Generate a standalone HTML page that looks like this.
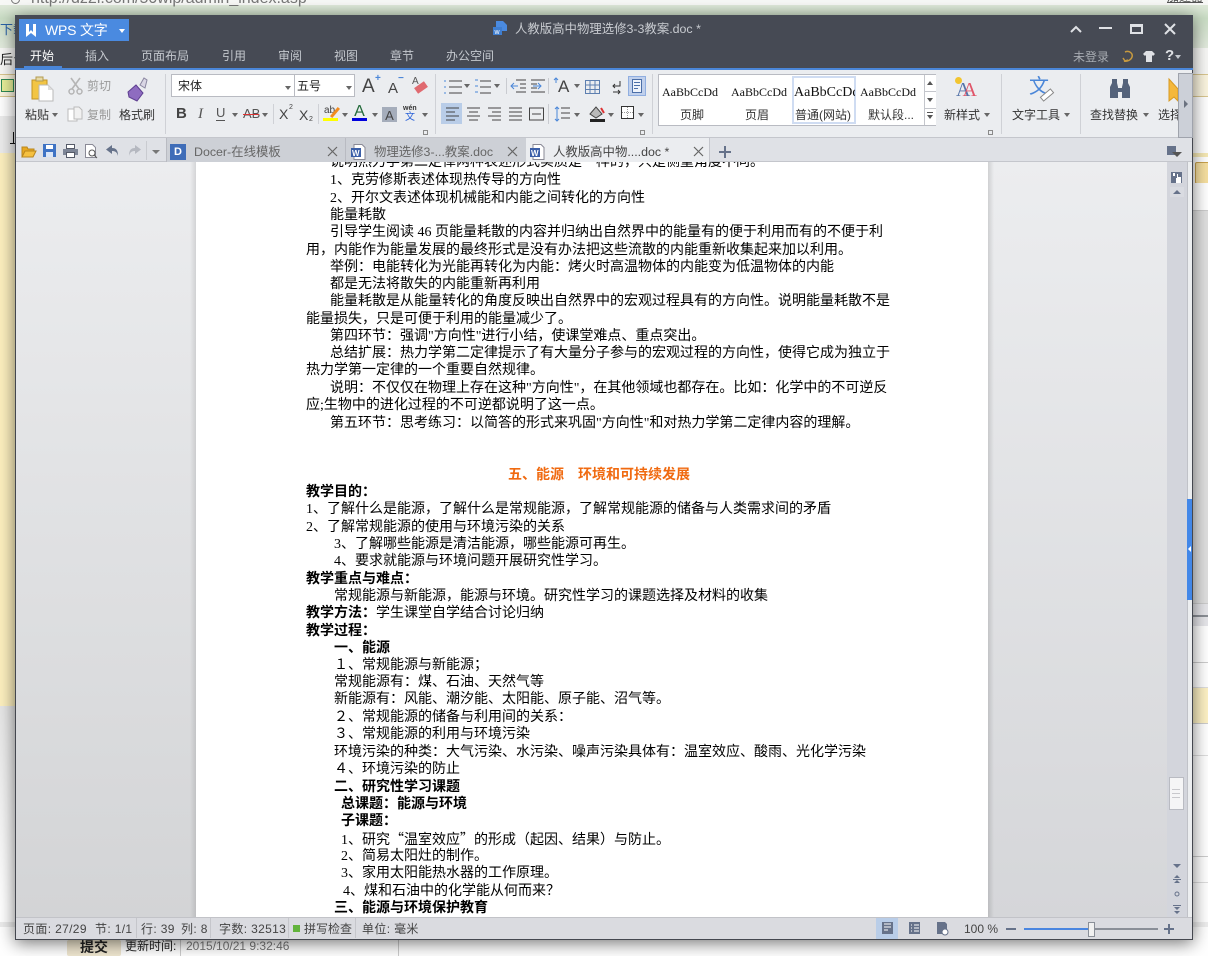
<!DOCTYPE html>
<html><head><meta charset="utf-8"><style>
html,body{margin:0;padding:0;width:1208px;height:956px;overflow:hidden;background:#fff}
body{position:relative;font-family:"Liberation Sans","Noto Sans CJK SC",sans-serif;font-size:12px;color:#333}
.a,.l,.t,.r,.s{position:absolute;white-space:nowrap}
.l{font-family:"Liberation Serif","Noto Sans CJK SC",serif;font-size:14px;line-height:18px;color:#000;height:18px}
.b{font-weight:700;color:#000}
.t{color:#c4c8ce;font-size:12px;line-height:18px;top:47px}
.r{font-size:12px;line-height:14px;color:#333;top:108px}
.g{color:#9a9a9a}
.s{top:922px;font-size:12px;line-height:14px;color:#444;letter-spacing:.35px}
.v{position:absolute;top:918px;width:1px;height:20px;background:#c5c6cb}
.d{position:absolute;width:0;height:0;border:3px solid transparent;border-top:4px solid #666;border-bottom:0}
.q{font-family:"Noto Sans CJK SC",sans-serif}
svg{position:absolute;overflow:visible}
</style></head><body>
<!-- background -->
<div class="a" style="left:0;top:5px;width:1208px;height:44px;background:linear-gradient(#dfe9da,#c9dcc4 30%,#e4ecdf)"></div>
<div class="a" style="left:0;top:-6px;width:1208px;height:11px;background:#f7f8f6"></div>
<div class="a" style="left:31px;top:-9px;color:#777;font-size:16px;line-height:16px">http://dz2i.com/50wip/admin_index.asp</div>
<div class="a" style="left:11px;top:-5px;width:7px;height:7px;border:1px solid #777;border-radius:50%"></div>
<div class="a" style="left:850px;top:-6px;color:#333;font-size:10px;line-height:10px">×</div>
<div class="a" style="left:1167px;top:-9px;color:#555;font-size:12px;line-height:12px;text-decoration:underline">加速器</div>
<div class="a" style="left:0;top:22px;font-size:13px;color:#2a62a8;line-height:16px">下载</div>
<div class="a" style="left:0;top:48px;width:1208px;height:26px;background:#f8f8f6"></div>
<div class="a" style="left:0;top:52px;font-size:13px;color:#222;line-height:16px">后台</div>
<div class="a" style="left:0;top:74px;width:1208px;height:21px;background:#fbf5df;border-top:1px solid #d9c68f;border-bottom:1px solid #d9c68f"></div>
<div class="a" style="left:1px;top:79px;width:11px;height:11px;background:#e8ef9a;border:1px solid #2d8a55"></div>
<div class="a" style="left:0;top:97px;width:1208px;height:19px;background:#fff"></div>
<div class="a" style="left:0;top:116px;width:1208px;height:37px;background:#ececec"></div>
<div class="a" style="left:10px;top:143px;width:6px;height:1px;background:#111"></div>
<div class="a" style="left:13px;top:132px;width:1px;height:11px;background:#111"></div>
<div class="a" style="left:0;top:153px;width:16px;height:553px;background:#fdf0bf"></div>
<div class="a" style="left:0;top:706px;width:16px;height:200px;background:linear-gradient(#e6e6e6,#fff)"></div>
<div class="a" style="left:0;top:906px;width:16px;height:50px;background:#fff"></div>
<div class="a" style="left:0;top:922px;width:16px;height:5px;background:#ececec"></div>
<div class="a" style="left:1193px;top:116px;width:15px;height:37px;background:#fff"></div>
<div class="a" style="left:1193px;top:153px;width:15px;height:4px;background:#f6e9b5"></div>
<div class="a" style="left:1195px;top:162px;width:14px;height:20px;background:#f6dfa0;border:1px solid #c9a24c;border-radius:2px"></div>
<div class="a" style="left:1193px;top:183px;width:15px;height:27px;background:#fff"></div>
<div class="a" style="left:1193px;top:210px;width:15px;height:393px;background:#e0e0e0;border-top:1px solid #ccc"></div>
<div class="a" style="left:1193px;top:603px;width:15px;height:23px;background:#e6e6ea;border-top:1px solid #ccc"></div>
<div class="a" style="left:1193px;top:615px;width:15px;height:2px;background:#8b8f96"></div>
<div class="a" style="left:1193px;top:626px;width:15px;height:330px;background:#fff"></div>
<div class="a" style="left:1193px;top:662px;width:15px;height:1px;background:#ccc"></div>
<div class="a" style="left:1193px;top:687px;width:15px;height:35px;background:#fdf1c4;border-top:1px solid #ddd;border-bottom:1px solid #ccc"></div>
<div class="a" style="left:1193px;top:755px;width:15px;height:1px;background:#ddd"></div>
<div class="a" style="left:1193px;top:856px;width:15px;height:25px;border-top:1px solid #ccc;border-bottom:1px solid #ddd"></div>
<div class="a" style="left:1193px;top:922px;width:15px;height:5px;background:#eee"></div>
<div class="a" style="left:67px;top:940px;width:54px;height:16px;background:#efe6cf;color:#222;font-weight:700;font-size:14px;text-align:center;line-height:15px;border-radius:2px">提交</div>
<div class="a" style="left:125px;top:939px;font-size:12px;color:#222;line-height:15px">更新时间:</div>
<div class="a" style="left:186px;top:939px;font-size:12px;color:#777;line-height:15px">2015/10/21 9:32:46</div>
<div class="a" style="left:180px;top:940px;width:1px;height:16px;background:#ccc"></div>
<div class="a" style="left:398px;top:940px;width:1px;height:16px;background:#ccc"></div>

<!-- window -->
<div class="a" style="left:15px;top:15px;width:1176px;height:923px;border:1px solid #44474f;box-shadow:0 3px 16px rgba(0,0,0,.55);background:#d6d7db"></div>
<!-- title bar -->
<div class="a" style="left:15px;top:15px;width:1178px;height:53px;background:#464a54"></div>
<div class="a" style="left:15px;top:68px;width:1178px;height:2px;background:#4a86d8"></div>
<div class="a" style="left:19px;top:19px;width:110px;height:22px;background:#4a8ae0"></div>
<svg style="left:25px;top:24px" width="12" height="13"><path d="M1 0h3v8l2-2 2 2V0h3v13l-5-4-5 4z" fill="#fff"/></svg>
<div class="a" style="left:45px;top:21px;color:#fff;font-size:14px;line-height:18px;letter-spacing:-.2px">WPS 文字</div>
<div class="d" style="left:119px;top:29px;border-top-color:#fff"></div>
<svg style="left:493px;top:21px" width="15" height="14"><path d="M3 0h7l4 4v6H3z" fill="#4a8ae0"/><rect x="0" y="6" width="9" height="8" fill="#3f7ed0"/><text x="1.500" y="13" font-size="7" fill="#fff" font-family="Liberation Sans">w</text></svg>
<div class="a" style="left:515px;top:20px;font-size:12.400px;line-height:18px;color:#c8cbd0">人教版高中物理选修3-3教案.doc *</div>
<svg style="left:0;top:0" width="1208" height="70"><g stroke="#dfe1e5" stroke-width="2" fill="none"><path d="M1071 32l5-5 5 5"/><path d="M1099 28h13"/><rect x="1131" y="25" width="11" height="8"/><path d="M1165 24l10 10M1175 24l-10 10"/></g><path d="M1130 24h13v3h-13z" fill="#dfe1e5"/></svg>
<!-- tabs -->
<div class="a" style="left:30px;top:46px;color:#fff;font-size:12px;line-height:20px">开始</div>
<div class="a" style="left:24px;top:66px;width:38px;height:2px;background:#4a86d8"></div>
<div class="t" style="left:85px">插入</div>
<div class="t" style="left:141px">页面布局</div>
<div class="t" style="left:222px">引用</div>
<div class="t" style="left:278px">审阅</div>
<div class="t" style="left:334px">视图</div>
<div class="t" style="left:390px">章节</div>
<div class="t" style="left:446px">办公空间</div>
<div class="t" style="left:1073px;top:48px;color:#a8acb2">未登录</div>
<svg style="left:1122px;top:50px" width="12" height="13"><path d="M3 2c5-2 8 2 7 5s-5 5-8 4M1 8l2 3 3-1" fill="none" stroke="#c79a3f" stroke-width="1.500"/></svg>
<svg style="left:1143px;top:50px" width="12" height="12"><path d="M3 1h6l3 3-2 2-1-1v7H3V5L2 6 0 4z" fill="#dfe1e5"/></svg>
<div class="a" style="left:1165px;top:47px;color:#dfe1e5;font-size:15px;line-height:18px;font-weight:700">?</div>
<div class="d" style="left:1175px;top:55px;border-top-color:#c4c8ce"></div>

<!-- ribbon -->
<div class="a" style="left:16px;top:70px;width:1176px;height:68px;background:#ebedf0;border-bottom:1px solid #c4c6cc;box-sizing:border-box"></div>
<div class="a" style="left:165px;top:74px;width:1px;height:60px;background:#cfd1d6"></div>
<div class="a" style="left:435px;top:74px;width:1px;height:60px;background:#cfd1d6"></div>
<div class="a" style="left:652px;top:74px;width:1px;height:60px;background:#cfd1d6"></div>
<div class="a" style="left:1001px;top:74px;width:1px;height:60px;background:#cfd1d6"></div>
<div class="a" style="left:1080px;top:74px;width:1px;height:60px;background:#cfd1d6"></div>
<!-- clipboard -->
<svg style="left:31px;top:77px" width="24" height="25"><path d="M1 3h15v19H1z" fill="#f2c544" stroke="#c29425"/><path d="M5 0h7v4H5z" fill="#e6d9a6" stroke="#b39a50"/><path d="M8 8h9l5 5v11H8z" fill="#fff" stroke="#b9b9b9"/><path d="M17 8v5h5z" fill="#ddd"/></svg>
<div class="r" style="left:25px">粘贴</div><div class="d" style="left:52px;top:113px"></div>
<svg style="left:68px;top:78px" width="16" height="17"><path d="M3 0l8 11M12 0L4 11" stroke="#b5b5b5" stroke-width="1.600" fill="none"/><circle cx="3.500" cy="13.500" r="2.500" fill="none" stroke="#b5b5b5" stroke-width="1.500"/><circle cx="11.500" cy="13.500" r="2.500" fill="none" stroke="#b5b5b5" stroke-width="1.500"/></svg>
<div class="r g" style="left:87px;top:79px">剪切</div>
<svg style="left:67px;top:106px" width="16" height="16"><path d="M1 3h9v12H1z" fill="#fff" stroke="#bbb"/><path d="M7 1h5l3 3v9H7z" fill="#f1f1f1" stroke="#bbb"/></svg>
<div class="r g" style="left:87px">复制</div>
<svg style="left:127px;top:77px" width="22" height="25"><path d="M1 15L9 8l7 8-6 8-8-4z" fill="#8e6cc0" stroke="#5e3f90"/><path d="M13 8l4-7 3 2-2 8z" fill="#d9d6e4" stroke="#8a86a0"/></svg>
<div class="r" style="left:119px">格式刷</div>
<!-- font -->
<div class="a" style="left:171px;top:74px;width:182px;height:21px;background:#fff;border:1px solid #b9bbc2"></div>
<div class="a" style="left:294px;top:75px;width:1px;height:21px;background:#b9bbc2"></div>
<div class="a" style="left:178px;top:79px;font-size:12px;line-height:14px;color:#222">宋体</div>
<div class="a" style="left:297px;top:79px;font-size:12px;line-height:14px;color:#222">五号</div>
<div class="d" style="left:285px;top:86px"></div>
<div class="d" style="left:346px;top:86px"></div>
<div class="a" style="left:362px;top:75px;font-size:19px;line-height:24px;color:#444">A</div>
<div class="a" style="left:375px;top:73px;font-size:10px;line-height:12px;color:#4a86d8;font-weight:700">+</div>
<div class="a" style="left:388px;top:79px;font-size:15px;line-height:20px;color:#444">A</div>
<div class="a" style="left:398px;top:73px;font-size:10px;line-height:12px;color:#4a86d8;font-weight:700">−</div>
<div class="a" style="left:412px;top:77px;font-size:10px;line-height:10px;color:#555">A</div>
<div class="a" style="left:415px;top:84px;width:12px;height:7px;background:#e06a70;transform:rotate(-35deg)"></div>
<div class="a" style="left:176px;top:106px;font-size:15px;font-weight:700;color:#444;line-height:16px">B</div>
<div class="a" style="left:198px;top:106px;font-size:15px;font-style:italic;color:#555;line-height:16px;font-family:'Liberation Serif',serif">I</div>
<div class="a" style="left:216px;top:105px;font-size:13px;color:#555;line-height:16px;border-bottom:1px solid #555;height:15px">U</div>
<div class="d" style="left:232px;top:113px"></div>
<div class="a" style="left:243px;top:106px;font-size:13px;color:#555;line-height:16px">AB</div>
<div class="a" style="left:243px;top:114px;width:16px;height:1px;background:#d33"></div>
<div class="d" style="left:262px;top:113px"></div>
<div class="a" style="left:273px;top:104px;width:1px;height:20px;background:#cfd1d6"></div>
<div class="a" style="left:279px;top:105px;font-size:14px;color:#444;line-height:18px">X</div><div class="a" style="left:289px;top:104px;font-size:7px;color:#444;line-height:8px">2</div>
<div class="a" style="left:299px;top:106px;font-size:14px;color:#444;line-height:18px">X</div><div class="a" style="left:309px;top:116px;font-size:7px;color:#444;line-height:8px">2</div>
<div class="a" style="left:318px;top:104px;width:1px;height:20px;background:#cfd1d6"></div>
<div class="a" style="left:324px;top:105px;font-size:10px;color:#444;line-height:12px">ab</div>
<div class="a" style="left:329px;top:111px;width:12px;height:3px;background:#f28c1f;transform:rotate(-50deg)"></div>
<div class="a" style="left:323px;top:118px;width:15px;height:3px;background:#ff0"></div>
<div class="d" style="left:342px;top:113px"></div>
<div class="a" style="left:352px;top:103px;width:15px;font-size:16px;color:#236a3a;line-height:18px;text-align:center">A</div>
<div class="a" style="left:352px;top:118px;width:15px;height:3px;background:#00d"></div>
<div class="d" style="left:372px;top:113px"></div>
<div class="a" style="left:382px;top:107px;width:15px;height:15px;background:#a5adbb;font-size:13px;text-align:center;line-height:17px;color:#444">A</div>
<div class="a" style="left:403px;top:105px;font-size:7px;color:#333;line-height:8px;font-weight:700">wén</div>
<div class="a" style="left:405px;top:113px;font-size:10px;color:#2a62d8;line-height:10px">文</div>
<div class="d" style="left:422px;top:113px"></div>
<div class="a" style="left:423px;top:130px;width:3px;height:3px;border:1px solid #8a8a8a"></div>
<!-- paragraph icons -->
<div class="a" style="left:441px;top:103px;width:21px;height:21px;background:#b9cde8"></div>
<svg style="left:0;top:0" width="1208" height="140" fill="none">
<g stroke="#444"><path d="M449 81h13M449 87h13M449 93h13"/><path d="M480 81h11M480 87h11M480 93h11"/><path d="M516 80h10M520 84h6M520 88h6M516 92h10"/><path d="M531 80h14M531 84h6M531 88h6M531 92h14"/></g>
<g stroke="#4a86d8"><path d="M444 81h2M444 87h2M444 93h2M475 80h3M475 86h3M475 92h3"/><path d="M518 86h-7M514 83l-3 3 3 3M533 86h8M538 83l3 3-3 3"/></g>
<g stroke="#5d7fb0"><path d="M585.500 80.500h14v13h-14zM585 85h15M585 89.500h15M590 80v14M595 80v14"/></g>
<path d="M506.500 78v16M548.500 78v16" stroke="#c9cbd0"/>
<g stroke="#444"><path d="M446 108h13M446 112h9M446 116h13M446 120h9"/><path d="M467 108h13M469 112h9M467 116h13M469 120h9"/><path d="M488 108h13M492 112h9M488 116h13M492 120h9"/><path d="M509 108h13M509 112h13M509 116h13M509 120h13"/><path d="M529 108h15M529 120h15M529.500 108v12M543.500 108v12M532 114h9"/><path d="M561 108h9M561 113h9M561 118h9"/></g>
<path d="M557 107v14M555 109l2-2 2 2M555 119l2 2 2-2" stroke="#4a86d8"/>
<path d="M548.500 104v20" stroke="#c9cbd0"/>
<path d="M621.500 106.500h12v12h-12z" fill="#fff" stroke="#333"/><path d="M627.500 107v11M622 112.500h11" stroke="#999" stroke-dasharray="1 1"/>
<path d="M620 81v5h-7M615 84l-2 2 2 2M613 92h7M618 90l2 2-2 2" stroke="#333"/>
<path d="M590 114l6-7 6 7-6 4z" fill="#b9b9b9" stroke="#444"/><path d="M590 119h15v3h-15z" fill="#222"/><path d="M601 108l3 5" stroke="#d33" stroke-width="2"/>
<path d="M556 83v-5M554 80l2-2 2 2" stroke="#4a86d8"/>
</svg>
<div class="d" style="left:464px;top:84px"></div><div class="d" style="left:494px;top:84px"></div>
<div class="d" style="left:574px;top:84px"></div>
<div class="a" style="left:558px;top:77px;font-size:17px;color:#444;line-height:20px">A</div>
<svg style="left:446px;top:107px" width="14" height="14" fill="none" stroke="#444"><path d="M0 1h13M0 5h9M0 9h13M0 13h9"/></svg>
<div class="d" style="left:574px;top:113px"></div>
<div class="d" style="left:608px;top:113px"></div>
<div class="d" style="left:638px;top:113px"></div>
<div class="a" style="left:628px;top:76px;width:18px;height:20px;background:#c0d0ec;border:1px solid #90aee0;box-sizing:border-box"></div>
<div class="a" style="left:632px;top:79px;width:10px;height:14px;background:#eef3fb;border:1px solid #4c6fa8;box-sizing:border-box"></div>
<svg style="left:634px;top:82px" width="6" height="8"><path d="M0 .5h6M0 3.500h6M0 6.500h4" stroke="#4c6fa8"/></svg>
<div class="a" style="left:640px;top:130px;width:3px;height:3px;border:1px solid #8a8a8a"></div>
<!-- styles -->
<div class="a" style="left:658px;top:74px;width:276px;height:50px;background:#fff;border:1px solid #b9bbc2"></div>
<div class="a" style="left:792px;top:76px;width:60px;height:44px;background:#fff;border:2px solid #cfdcf2"></div>
<div class="a" style="left:662px;top:85px;font-family:'Liberation Serif',serif;font-size:12px;line-height:14px;color:#111">AaBbCcDd</div>
<div class="a" style="left:731px;top:85px;font-family:'Liberation Serif',serif;font-size:12px;line-height:14px;color:#111">AaBbCcDd</div>
<div class="a" style="left:794px;top:85px;width:61px;overflow:hidden;font-family:'Liberation Serif',serif;font-size:14px;line-height:16px;color:#111">AaBbCcDd</div>
<div class="a" style="left:860px;top:85px;font-family:'Liberation Serif',serif;font-size:12px;line-height:14px;color:#111">AaBbCcDd</div>
<div class="r" style="left:680px">页脚</div><div class="r" style="left:745px">页眉</div>
<div class="r" style="left:795px">普通(网站)</div><div class="r" style="left:868px">默认段...</div>
<div class="a" style="left:924px;top:75px;width:11px;height:50px;background:#fff;border-left:1px solid #c4c6cc"></div>
<div class="a" style="left:927px;top:81px;width:0;height:0;border:3px solid transparent;border-bottom:4px solid #555;border-top:0"></div>
<div class="d" style="left:927px;top:98px;border-top-color:#555"></div>
<div class="d" style="left:927px;top:115px;border-top-color:#555"></div>
<div class="a" style="left:927px;top:112px;width:6px;height:1px;background:#555"></div>
<div class="a" style="left:924px;top:91px;width:12px;height:1px;background:#c4c6cc"></div>
<div class="a" style="left:924px;top:108px;width:12px;height:1px;background:#c4c6cc"></div>
<div class="a" style="left:956px;top:80px;font-family:'Liberation Serif',serif;font-size:20px;line-height:20px;color:#5573a8"><span>A</span><span style="color:#e0566a;margin-left:-8px">A</span></div>
<div class="a" style="left:955px;top:77px;width:7px;height:7px;background:#f2c530;border-radius:50%"></div>
<div class="r" style="left:944px">新样式</div><div class="d" style="left:984px;top:113px"></div>
<div class="a" style="left:988px;top:130px;width:3px;height:3px;border:1px solid #8a8a8a"></div>
<div class="a" style="left:1029px;top:76px;font-size:20px;line-height:22px;color:#4a86d8">文</div>
<div class="a" style="left:1040px;top:92px;width:12px;height:4px;background:#fff;border:1px solid #888;transform:rotate(-40deg)"></div>
<div class="r" style="left:1012px">文字工具</div><div class="d" style="left:1064px;top:113px"></div>
<svg style="left:1109px;top:78px" width="22" height="22"><path d="M1 20V9l2-4V1h5v4l1 4v1h4V9l1-4V1h5v4l2 4v11h-8v-6H9v6z" fill="#54627a"/></svg>
<div class="r" style="left:1090px">查找替换</div><div class="d" style="left:1143px;top:113px"></div>
<div class="r" style="left:1158px">选择</div>
<svg style="left:1169px;top:79px" width="9" height="22"><path d="M0 0l9 10v12l-4-4-5 4z" fill="#f5b83c" stroke="#d79a24"/></svg>
<div class="a" style="left:1178px;top:73px;width:13px;height:63px;background:#ccd0d8;border:1px solid #9fa3ac"></div>
<div class="a" style="left:1184px;top:100px;width:0;height:0;border:4px solid transparent;border-left:4px solid #6b7280"></div>

<!-- tab bar -->
<div class="a" style="left:16px;top:138px;width:1176px;height:24px;background:#dfe1e6;border-bottom:1px solid #c4c6cc;box-sizing:border-box"></div>
<svg style="left:21px;top:144px" width="16" height="14"><path d="M1 13V3h5l1 2h6v2" fill="#e8a820" stroke="#b9861e"/><path d="M1 13l3-6h11l-3 6z" fill="#f5c040" stroke="#b9861e"/></svg>
<svg style="left:43px;top:144px" width="14" height="14"><path d="M0 0h13v13H0z" fill="#3f73c4"/><rect x="3" y="1" width="7" height="4" fill="#fff"/><rect x="3" y="8" width="7" height="5" fill="#dbe6f7"/></svg>
<svg style="left:63px;top:144px" width="15" height="14"><rect x="3.500" y=".5" width="8" height="4" fill="#fff" stroke="#555a68"/><rect x="0" y="5" width="15" height="6" fill="#7d8596"/><rect x="3.500" y="8.500" width="8" height="5" fill="#fff" stroke="#555a68"/></svg>
<svg style="left:85px;top:144px" width="14" height="15"><path d="M.5.500h7l3 3v10H.5z" fill="#fff" stroke="#8a8a96"/><circle cx="7" cy="9" r="3" fill="none" stroke="#555"/><path d="M9 11l3 3" stroke="#555"/></svg>
<svg style="left:106px;top:145px" width="13" height="12"><path d="M6 0L0 4.500 6 9V6c3 0 5 1 6 5 0-6-2-8-6-8z" fill="#66728a"/></svg>
<svg style="left:128px;top:145px" width="13" height="12"><path d="M7 0l6 4.500L7 9V6c-3 0-5 1-6 5 0-6 2-8 6-8z" fill="#b5b8c0"/></svg>
<div class="a" style="left:146px;top:141px;width:1px;height:19px;background:#c9cbd0"></div>
<div class="a" style="left:152px;top:150px;width:0;height:0;border:4px solid transparent;border-top:4px solid #777;border-bottom:0"></div>
<!-- doc tabs -->
<div class="a" style="left:166px;top:138px;width:179px;height:24px;background:#cdd0d6;border-left:1px solid #b9bbc2;box-sizing:border-box"></div>
<div class="a" style="left:345px;top:138px;width:181px;height:24px;background:#cdd0d6;border-left:1px solid #b9bbc2;box-sizing:border-box"></div>
<div class="a" style="left:526px;top:138px;width:184px;height:25px;background:#ebedf0;border-right:1px solid #c4c6cc;box-sizing:border-box"></div>
<div class="a" style="left:170px;top:144px;width:16px;height:16px;background:#3f6db8;color:#fff;font-size:11px;font-weight:700;text-align:center;line-height:16px">D</div>
<div class="a" style="left:194px;top:144px;font-size:12.400px;color:#666;line-height:16px">Docer-在线模板</div>
<div class="a" style="left:374px;top:144px;font-size:12.400px;color:#666;line-height:16px">物理选修3-...教案.doc</div>
<div class="a" style="left:553px;top:144px;font-size:12.400px;color:#444;line-height:16px">人教版高中物....doc *</div>
<svg style="left:0;top:138px" width="1208" height="25"><path d="M328 9l9 9M337 9l-9 9M508 9l9 9M517 9l-9 9M694 9l9 9M703 9l-9 9" fill="none" stroke="#666" stroke-width="1.200"/><path d="M719 14h12M725 8v12" stroke="#66728a" stroke-width="2" fill="none"/></svg>
<svg style="left:351px;top:144px" width="15" height="16"><path d="M3 .5h8l3 3v12H3z" fill="#fff" stroke="#8a8a96"/><rect x="0" y="4" width="10" height="9" fill="#3b5fa8"/><text x="1" y="12" font-size="8" font-weight="700" fill="#fff" font-family="Liberation Sans">W</text></svg>
<svg style="left:530px;top:144px" width="15" height="16"><path d="M3 .5h8l3 3v12H3z" fill="#fff" stroke="#8a8a96"/><rect x="0" y="4" width="10" height="9" fill="#3b5fa8"/><text x="1" y="12" font-size="8" font-weight="700" fill="#fff" font-family="Liberation Sans">W</text></svg>
<div class="a" style="left:1167px;top:146px;width:9px;height:9px;background:#66728a"></div>
<div class="a" style="left:1172px;top:152px;width:0;height:0;border:5px solid transparent;border-top:5px solid #555;border-bottom:0"></div>

<!-- doc area -->
<div class="a" style="left:16px;top:162px;width:180px;height:755px;background:linear-gradient(#ecedef,#d3d4d6)"></div>
<div class="a" style="left:196px;top:162px;width:792px;height:755px;background:#fff;overflow:hidden">
<div style="position:relative;left:-196px;top:-162px">
<div class="l" style="left:330px;top:154px">说明热力学第二定律两种表述形式实质是一样的，只是侧重角度不同。</div>
<div class="l" style="left:330px;top:172px">1、克劳修斯表述体现热传导的方向性</div>
<div class="l" style="left:330px;top:190px">2、开尔文表述体现机械能和内能之间转化的方向性</div>
<div class="l" style="left:330px;top:207px">能量耗散</div>
<div class="l" style="left:330px;top:224px">引导学生阅读 46 页能量耗散的内容并归纳出自然界中的能量有的便于利用而有的不便于利</div>
<div class="l" style="left:306px;top:242px">用，内能作为能量发展的最终形式是没有办法把这些流散的内能重新收集起来加以利用。</div>
<div class="l" style="left:330px;top:259px">举例：电能转化为光能再转化为内能：烤火时高温物体的内能变为低温物体的内能</div>
<div class="l" style="left:330px;top:276px">都是无法将散失的内能重新再利用</div>
<div class="l" style="left:330px;top:293px">能量耗散是从能量转化的角度反映出自然界中的宏观过程具有的方向性。说明能量耗散不是</div>
<div class="l" style="left:306px;top:311px">能量损失，只是可便于利用的能量减少了。</div>
<div class="l" style="left:330px;top:328px">第四环节：强调"方向性"进行小结，使课堂难点、重点突出。</div>
<div class="l" style="left:330px;top:345px">总结扩展：热力学第二定律提示了有大量分子参与的宏观过程的方向性，使得它成为独立于</div>
<div class="l" style="left:306px;top:362px">热力学第一定律的一个重要自然规律。</div>
<div class="l" style="left:330px;top:380px">说明：不仅仅在物理上存在这种"方向性"，在其他领域也都存在。比如：化学中的不可逆反</div>
<div class="l" style="left:306px;top:397px">应;生物中的进化过程的不可逆都说明了这一点。</div>
<div class="l" style="left:330px;top:415px">第五环节：思考练习：以简答的形式来巩固"方向性"和对热力学第二定律内容的理解。</div>
<div class="l b" style="left:508px;top:467px;color:#f06a10">五、能源　环境和可持续发展</div>
<div class="l b" style="left:306px;top:484px">教学目的：</div>
<div class="l" style="left:306px;top:501px">1、了解什么是能源，了解什么是常规能源，了解常规能源的储备与人类需求间的矛盾</div>
<div class="l" style="left:306px;top:519px">2、了解常规能源的使用与环境污染的关系</div>
<div class="l" style="left:334px;top:536px">3、了解哪些能源是清洁能源，哪些能源可再生。</div>
<div class="l" style="left:334px;top:553px">4、要求就能源与环境问题开展研究性学习。</div>
<div class="l b" style="left:306px;top:571px">教学重点与难点：</div>
<div class="l" style="left:334px;top:588px">常规能源与新能源，能源与环境。研究性学习的课题选择及材料的收集</div>
<div class="l" style="left:306px;top:605px"><span class="b">教学方法：</span>学生课堂自学结合讨论归纳</div>
<div class="l b" style="left:306px;top:623px">教学过程：</div>
<div class="l b" style="left:334px;top:640px">一、能源</div>
<div class="l" style="left:334px;top:657px">１、常规能源与新能源；</div>
<div class="l" style="left:334px;top:674px">常规能源有：煤、石油、天然气等</div>
<div class="l" style="left:334px;top:691px">新能源有：风能、潮汐能、太阳能、原子能、沼气等。</div>
<div class="l" style="left:334px;top:709px">２、常规能源的储备与利用间的关系：</div>
<div class="l" style="left:334px;top:726px">３、常规能源的利用与环境污染</div>
<div class="l" style="left:334px;top:744px">环境污染的种类：大气污染、水污染、噪声污染具体有：温室效应、酸雨、光化学污染</div>
<div class="l" style="left:334px;top:761px">４、环境污染的防止</div>
<div class="l b" style="left:334px;top:779px">二、研究性学习课题</div>
<div class="l b" style="left:341px;top:796px">总课题：能源与环境</div>
<div class="l b" style="left:341px;top:813px">子课题：</div>
<div class="l" style="left:341px;top:830px">1、研究<span class="q">“</span>温室效应<span class="q">”</span>的形成（起因、结果）与防止。</div>
<div class="l" style="left:341px;top:848px">2、简易太阳灶的制作。</div>
<div class="l" style="left:341px;top:865px">3、家用太阳能热水器的工作原理。</div>
<div class="l" style="left:343px;top:883px">4、煤和石油中的化学能从何而来？</div>
<div class="l b" style="left:334px;top:900px">三、能源与环境保护教育</div>
</div></div>
<div class="a" style="left:988px;top:162px;width:179px;height:755px;background:linear-gradient(#ecedef,#d5d6d9)"></div>
<div class="a" style="left:988px;top:162px;width:6px;height:755px;background:linear-gradient(90deg,rgba(0,0,0,.12),rgba(0,0,0,0))"></div>
<div class="a" style="left:190px;top:162px;width:6px;height:755px;background:linear-gradient(90deg,rgba(0,0,0,0),rgba(0,0,0,.1))"></div>
<!-- scrollbar -->
<div class="a" style="left:1167px;top:162px;width:20px;height:755px;background:#d3d5dc"></div>
<div class="a" style="left:1187px;top:162px;width:5px;height:755px;background:#eceef0;border-left:1px solid #c0c2c8;box-sizing:border-box"></div>
<div class="a" style="left:1187px;top:499px;width:5px;height:101px;background:#4287e8"></div>
<div class="a" style="left:1188px;top:546px;width:0;height:0;border:3px solid transparent;border-right:3px solid #fff;border-left:0"></div>
<svg style="left:1171px;top:172px" width="11" height="11"><path d="M0 0h11v11H0z" fill="#66728a"/><path d="M2 1h2v3H2z" fill="#fff"/><path d="M5 6h1V2h1v3h3v6H5z" fill="#fff"/></svg>
<div class="a" style="left:1170px;top:187px;width:14px;height:10px;background:#d9dbe1"></div>
<div class="a" style="left:1173px;top:190px;width:0;height:0;border:4px solid transparent;border-bottom:4px solid #66728a;border-top:0"></div>
<div class="a" style="left:1169px;top:777px;width:13px;height:31px;background:#f5f5f6;border:1px solid #b9bbc2"></div>
<div class="a" style="left:1172px;top:789px;width:8px;height:1px;background:#c8c8cc"></div>
<div class="a" style="left:1172px;top:793px;width:8px;height:1px;background:#c8c8cc"></div>
<div class="a" style="left:1172px;top:797px;width:8px;height:1px;background:#c8c8cc"></div>
<div class="a" style="left:1173px;top:864px;width:0;height:0;border:4px solid transparent;border-top:4px solid #66728a;border-bottom:0"></div>
<svg style="left:1172px;top:874px" width="10" height="42" fill="#66728a"><path d="M5 1l3 3H2zM1 5h8v1H1zM5 6l3 3H2z"/><circle cx="5" cy="20" r="2" fill="none" stroke="#66728a"/><path d="M1 31h8v1H1zM2 33h6l-3 3zM2 37h6l-3 3z"/></svg>

<!-- status -->
<div class="a" style="left:16px;top:917px;width:1176px;height:22px;background:#dadbe0;border-top:1px solid #c2c3c8;box-sizing:border-box"></div>
<div class="s" style="left:23px">页面: 27/29</div>
<div class="s" style="left:95px">节: 1/1</div>
<div class="v" style="left:136px"></div>
<div class="s" style="left:141px">行: 39</div>
<div class="s" style="left:181px">列: 8</div>
<div class="v" style="left:210px"></div>
<div class="s" style="left:219px">字数: 32513</div>
<div class="v" style="left:288px"></div>
<div class="a" style="left:293px;top:925px;width:7px;height:7px;background:#62b33c"></div>
<div class="s" style="left:304px;letter-spacing:0">拼写检查</div>
<div class="v" style="left:355px"></div>
<div class="s" style="left:362px">单位: 毫米</div>
<div class="a" style="left:876px;top:918px;width:22px;height:21px;background:#b9cde8"></div>
<svg style="left:0;top:917px" width="1208" height="22"><path d="M882 5h11v12h-11z" fill="#66728a"/><path d="M884 7h7M884 10h7M884 13h4" stroke="#fff"/><path d="M909 5h11v12h-11z" fill="#66728a"/><path d="M911 8h1M914 8h5M911 11h1M914 11h5M911 14h1M914 14h5" stroke="#fff"/><path d="M937 5h8l2 2v10h-10z" fill="#66728a"/><circle cx="945" cy="15" r="3" fill="#fff" stroke="#66728a"/></svg>
<div class="a" style="left:964px;top:921px;font-size:12px;line-height:16px;color:#444">100 %</div>
<div class="a" style="left:1006px;top:928px;width:10px;height:2px;background:#66728a"></div>
<div class="a" style="left:1024px;top:928px;width:64px;height:2px;background:#4a86e0"></div>
<div class="a" style="left:1088px;top:928px;width:70px;height:2px;background:#8a8f98"></div>
<div class="a" style="left:1088px;top:922px;width:5px;height:13px;background:#f1f1f1;border:1px solid #8a8f98"></div>
<svg style="left:1164px;top:924px" width="10" height="10"><path d="M0 5h10M5 0v10" stroke="#66728a" stroke-width="2"/></svg>
</body></html>
